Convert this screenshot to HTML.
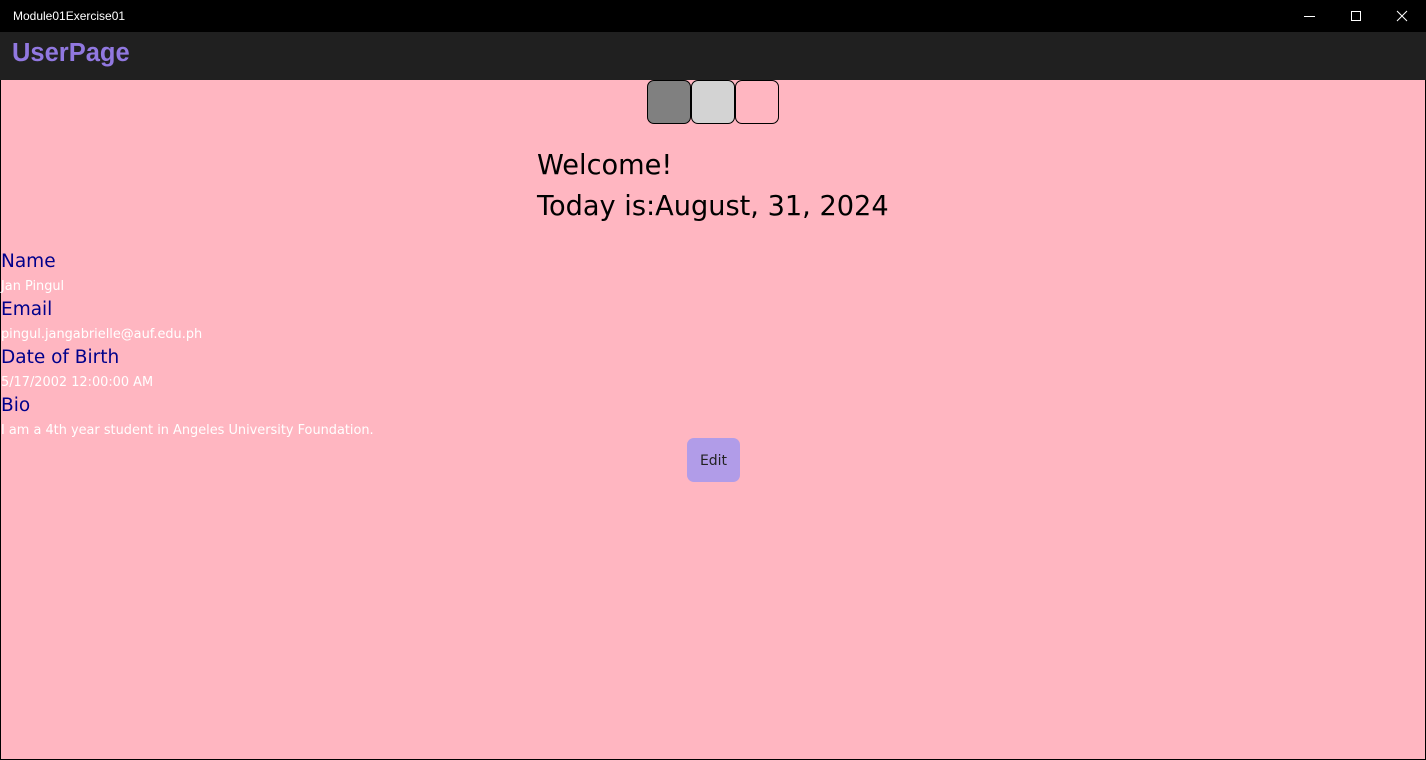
<!DOCTYPE html>
<html><head><meta charset="utf-8"><style>
*{margin:0;padding:0;box-sizing:border-box}
body{width:1426px;height:760px;overflow:hidden;background:#000;font-family:"DejaVu Sans","Liberation Sans",sans-serif;position:relative}
.tb{position:absolute;left:0;top:0;width:1426px;height:32px;background:#000;color:#fff;font-size:12px}
.tb .t{position:absolute;left:13px;top:9px;font-family:"Liberation Sans",sans-serif}
.hd{position:absolute;left:0;top:32px;width:1426px;height:48px;background:#202020}
.hd span{position:absolute;left:12px;top:7px;font-size:25.5px;font-weight:bold;color:#9178e0;font-family:"Liberation Sans",sans-serif}
.main{position:absolute;left:1px;top:80px;width:1424px;height:679px;background:#ffb6c1}
.b{position:absolute;top:0;width:44px;height:44px;border:1px solid #000;border-radius:7px}
.w{position:absolute;left:536px;font-size:27.2px;color:#000;white-space:nowrap}
.l{position:absolute;left:0;font-size:18.5px;color:#00008b;white-space:nowrap}
.v{position:absolute;left:0;font-size:12.9px;color:#fff;white-space:nowrap}
.edit{position:absolute;left:686px;top:358px;width:53px;height:44px;background:#b19ce8;border-radius:7px;font-size:14px;color:#222;text-align:center;line-height:46px}
</style></head><body>
<div class="tb"><span class="t">Module01Exercise01</span>
<svg style="position:absolute;left:1300px;top:8px" width="120" height="18" viewBox="0 0 120 18">
<line x1="4" y1="8.5" x2="15" y2="8.5" stroke="#fff" stroke-width="1"/>
<rect x="51.5" y="3.5" width="9" height="9" fill="none" stroke="#fff" stroke-width="1"/>
<path d="M97 3L107 13M107 3L97 13" stroke="#fff" stroke-width="1"/>
</svg></div>
<div class="hd"><span>UserPage</span></div>
<div class="main">
<div class="b" style="left:646px;background:#808080"></div>
<div class="b" style="left:690px;background:#d3d3d3"></div>
<div class="b" style="left:734px;background:#ffb6c1"></div>
<div class="w" style="top:70px">Welcome!</div>
<div class="w" style="top:111px">Today is:August, 31, 2024</div>
<div class="l" style="top:171px">Name</div>
<div class="v" style="top:199px">Jan Pingul</div>
<div class="l" style="top:219px">Email</div>
<div class="v" style="top:247px">pingul.jangabrielle@auf.edu.ph</div>
<div class="l" style="top:267px">Date of Birth</div>
<div class="v" style="top:295px">5/17/2002 12:00:00 AM</div>
<div class="l" style="top:315px">Bio</div>
<div class="v" style="top:343px">I am a 4th year student in Angeles University Foundation.</div>
<div class="edit">Edit</div>
</div>
</body></html>
